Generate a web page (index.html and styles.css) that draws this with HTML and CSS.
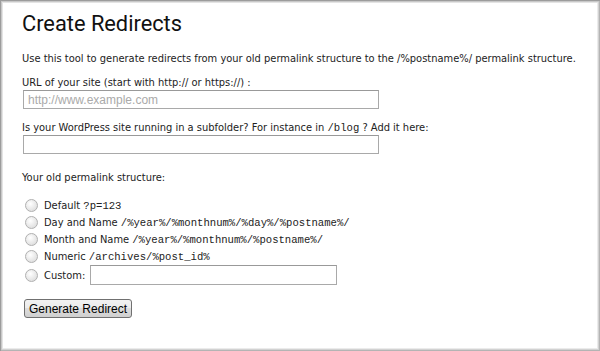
FILE: index.html
```html
<!DOCTYPE html>
<html lang="en">
<head>
    <meta charset="UTF-8">
    <meta name="viewport" content="width=device-width, initial-scale=1.0">
    <title>Create Redirects</title>
    <link rel="stylesheet" href="styles.css">
</head>
<body>

    <div class="frame">
        <h1>Create Redirects</h1>
        <p class="intro">Use this tool to generate redirects from your old permalink structure to the /%postname%/ permalink structure.</p>

        <form class="redirect-form" onsubmit="return false;">
            <label class="field-label" for="site-url">URL of your site (start with http:// or https://) :</label>
            <input class="text-input" type="text" id="site-url" placeholder="http://www.example.com">

            <label class="field-label second" for="subfolder">Is your WordPress site running in a subfolder? For instance in <code>/blog</code> ? Add it here:</label>
            <input class="text-input" type="text" id="subfolder">

            <p class="field-label third">Your old permalink structure:</p>

            <ul class="options">
                <li><input type="radio" name="structure" id="opt-default"><label for="opt-default">Default <code>?p=123</code></label></li>
                <li><input type="radio" name="structure" id="opt-day"><label for="opt-day">Day and Name <code>/%year%/%monthnum%/%day%/%postname%/</code></label></li>
                <li><input type="radio" name="structure" id="opt-month"><label for="opt-month">Month and Name <code>/%year%/%monthnum%/%postname%/</code></label></li>
                <li><input type="radio" name="structure" id="opt-numeric"><label for="opt-numeric">Numeric <code>/archives/%post_id%</code></label></li>
                <li class="custom"><input type="radio" name="structure" id="opt-custom"><label for="opt-custom">Custom:</label><input class="text-input custom-input" type="text"></li>
            </ul>

            <button class="btn" type="submit">Generate Redirect</button>
        </form>
    </div>

</body>
</html>
```

FILE: styles.css
```css
html, body {
    margin: 0;
    padding: 0;
    background: #fff;
}
body {
    font-family: "DejaVu Sans Condensed", "DejaVu Sans", sans-serif;
    font-size: 11px;
    color: #222;
}
.frame {
    box-sizing: border-box;
    width: 600px;
    height: 351px;
    padding: 9px 10px 0 22px;
    box-shadow: inset 1px 1px 0 #9c9c9c, inset -1px -1px 0 #b4b4b4,
                inset 2px 2px 0 #c8c8c8, inset -2px -2px 0 #d2d2d2,
                inset 3px 3px 0 #e4e4e4, inset -3px -3px 0 #ebebeb;
    overflow: hidden;
}
h1 {
    font-family: Roboto, sans-serif;
    font-weight: normal;
    font-size: 21.8px;
    line-height: 30px;
    margin: 0;
    color: #111;
}
.intro {
    margin: 13px 0 0;
    line-height: 14px;
    white-space: nowrap;
}
.redirect-form {
    display: flex;
    flex-direction: column;
    align-items: flex-start;
}
.field-label {
    display: block;
    line-height: 14px;
    margin: 10px 0 0;
}
.field-label.second {
    margin-top: 12px;
}
.field-label.third {
    margin: 17px 0 0;
}
code {
    font-family: "Liberation Mono", monospace;
    font-size: 10.6px;
}
.text-input {
    box-sizing: border-box;
    width: 356px;
    height: 19px;
    margin: 0 0 0 1px;
    padding: 0 4px;
    border: 1px solid #a9a9a9;
    border-top-color: #999;
    font-family: "Liberation Sans", sans-serif;
    font-size: 12px;
    color: #222;
    background: #fff;
}
.text-input::placeholder {
    color: #aaa;
}
.options {
    list-style: none;
    margin: 12px 0 0;
    padding: 0;
}
.options li {
    display: flex;
    align-items: center;
    height: 17px;
}
.options li.custom {
    height: 20px;
}
.options input[type="radio"] {
    appearance: none;
    box-sizing: border-box;
    width: 13px;
    height: 13px;
    margin: 0 6px 0 3px;
    border: 1px solid #b0b0b0;
    border-radius: 50%;
    background: radial-gradient(circle at 40% 35%, #ffffff 0, #ececec 45%, #d6d6d6 100%);
}
.custom-input {
    width: 247px;
    height: 20px;
    margin-left: 5px;
}
.btn {
    margin: 14px 0 0 2px;
    padding: 0 4px;
    height: 19px;
    font-family: "Liberation Sans", sans-serif;
    font-size: 12px;
    color: #000;
    border: 1px solid #707070;
    border-radius: 3px;
    background: linear-gradient(#f2f2f2, #ebebeb 50%, #dddddd 50%, #cfcfcf);
    cursor: pointer;
}
```
